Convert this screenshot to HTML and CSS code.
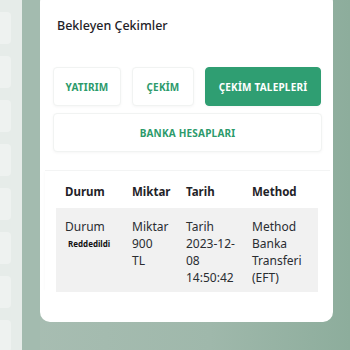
FILE: index.html
```html
<!DOCTYPE html>
<html lang="tr">
<head>
  <meta charset="UTF-8">
  <meta name="viewport" content="width=device-width, initial-scale=1.0">
  <title>Bekleyen Çekimler</title>
  <link rel="stylesheet" href="styles.css">
</head>
<body>
  <div class="page">
    <div class="sidebar">
      <div class="side-item"></div>
      <div class="side-item"></div>
      <div class="side-item"></div>
      <div class="side-item"></div>
      <div class="side-item"></div>
      <div class="side-item"></div>
      <div class="side-item"></div>
      <div class="side-item"></div>
    </div>
    <div class="backdrop-strip"></div>

    <div class="modal">
      <h2 class="modal-title">Bekleyen Çekimler</h2>

      <div class="tabs">
        <button class="tab tab-yatirim">YATIRIM</button>
        <button class="tab tab-cekim">ÇEKİM</button>
        <button class="tab tab-talep active">ÇEKİM TALEPLERİ</button>
      </div>
      <button class="tab tab-wide">BANKA HESAPLARI</button>

      <div class="table-wrap">
        <table class="requests">
          <thead>
            <tr>
              <th class="col-durum">Durum</th>
              <th class="col-miktar">Miktar</th>
              <th class="col-tarih">Tarih</th>
              <th class="col-method">Method</th>
            </tr>
          </thead>
          <tbody>
            <tr>
              <td>Durum<span class="status">Reddedildi</span></td>
              <td>Miktar<br>900<br>TL</td>
              <td>Tarih<br>2023-12-<br>08<br>14:50:42</td>
              <td>Method<br>Banka<br>Transferi<br>(EFT)</td>
            </tr>
          </tbody>
        </table>
      </div>
    </div>
  </div>
</body>
</html>
```

FILE: styles.css
```css
:root {
  --green: #2f9e72;
  --green-text: #2c9a6b;
  --text: #1f2328;
  --row-bg: #f1f1f1;
}
html, body {
  margin: 0;
  padding: 0;
}
body {
  width: 350px;
  height: 350px;
  overflow: hidden;
  font-family: "Noto Sans", "Open Sans", sans-serif;
  color: var(--text);
  background: linear-gradient(90deg, #a9beb3 0%, #9fb8ab 60%, #8dad9c 100%);
}
.page {
  display: flex;
  height: 350px;
}
.sidebar {
  width: 22px;
  background-color: #e6ece9;
  display: flex;
  flex-direction: column;
  gap: 12px;
  padding-top: 12px;
  box-sizing: border-box;
}
.side-item {
  width: 11px;
  height: 32px;
  background-color: #eef2f0;
  border-radius: 0 4px 4px 0;
  flex-shrink: 0;
}
.backdrop-strip {
  width: 18px;
  background-color: #a3bbaf;
}
.modal {
  width: 293px;
  height: 330px;
  margin-top: -8px;
  background-color: #fff;
  border-radius: 10px;
  padding: 8px 11px 0 13px;
  box-sizing: border-box;
}
.modal-title {
  margin: 18px 0 0 4px;
  font-size: 12.5px;
  font-weight: 500;
  line-height: 16px;
}
.tabs {
  display: flex;
  gap: 11px;
  margin-top: 33px;
}
.tab {
  font-family: inherit;
  font-size: 10px;
  font-weight: 700;
  letter-spacing: 0.2px;
  color: var(--green-text);
  background-color: #fff;
  border: 1px solid #f1f3f2;
  border-radius: 4px;
  box-shadow: 0 1px 3px rgba(0, 0, 0, 0.04);
  height: 39px;
  padding: 0;
  cursor: pointer;
}
.tab-yatirim { width: 68px; }
.tab-cekim { width: 62px; }
.tab-talep { width: 116px; }
.tab.active {
  background-color: var(--green);
  border-color: var(--green);
  color: #fff;
}
.tab-wide {
  display: block;
  width: 269px;
  margin-top: 7px;
}
.table-wrap {
  margin: 18px -8px 0 -8px;
  padding: 4px 11px 0 11px;
  border-top: 1px solid #f3f4f4;
  box-shadow: -2px 0 3px -2px rgba(0, 0, 0, 0.04);
}
.requests {
  width: 262px;
  border-collapse: collapse;
  table-layout: fixed;
  font-size: 12px;
}
.requests th {
  text-align: left;
  font-weight: 700;
  font-size: 11.5px;
  height: 33px;
  padding: 0 0 0 9px;
}
.col-durum { width: 58px; }
.col-miktar { width: 45px; }
.col-tarih { width: 57px; }
.col-method { width: 66px; }
.requests td {
  background-color: var(--row-bg);
  vertical-align: top;
  line-height: 17px;
  padding: 10px 0 6px 9px;
  color: #2a2d31;
}
.status {
  display: block;
  font-size: 8px;
  font-weight: 700;
  margin-left: 3px;
  color: #111;
}
```
